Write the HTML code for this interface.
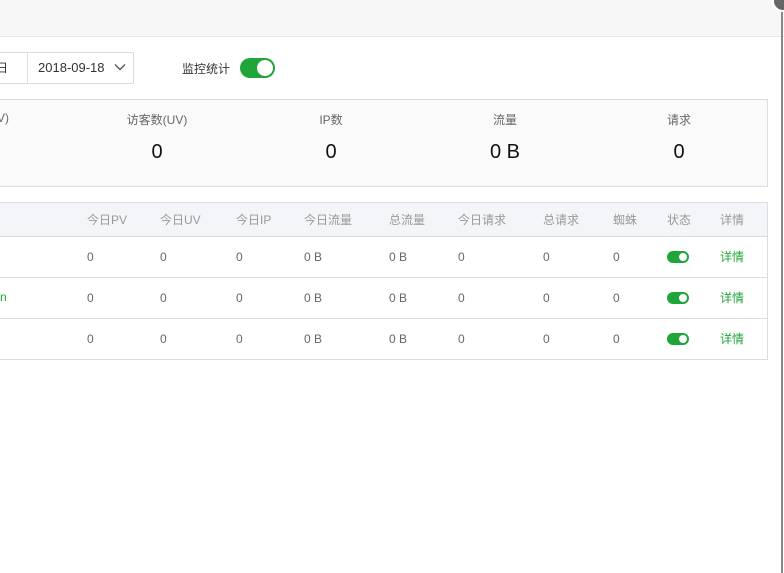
<html><head><style>
body{margin:0;width:784px;height:573px;background:#fff;position:relative;overflow:hidden;font-family:"Liberation Sans","Noto Sans CJK SC",sans-serif;font-size:12px;color:#666}
.a{position:absolute;white-space:nowrap}
.c{transform:translateX(-50%)}
.sw{position:absolute;width:22px;height:12px;border-radius:6px;background:#20a53a}
.sw:after{content:"";position:absolute;right:2px;top:2px;width:8px;height:8px;border-radius:50%;background:#fff}
.h{color:#999;top:211px}
</style></head><body>
<div class="a" style="left:0;top:0;width:784px;height:36px;background:#f7f7f7;border-bottom:1px solid #e5e5e5"></div>
<div class="a" style="left:-10px;top:52px;width:142px;height:30px;border:1px solid #ddd"></div>
<div class="a" style="left:27px;top:52px;width:1px;height:32px;background:#ddd"></div>
<div class="a" style="left:-4px;top:59px;color:#333">日</div>
<div class="a" style="left:38px;top:60px;color:#333;font-size:13px">2018-09-18</div>
<svg class="a" style="left:114px;top:63px" width="12" height="8"><path d="M1 1.5L6 6.5L11 1.5" fill="none" stroke="#555" stroke-width="1.4"/></svg>
<div class="a" style="left:182px;top:60px;color:#333">监控统计</div>
<div class="a" style="left:240px;top:58px;width:35px;height:20px;border-radius:10px;background:#20a53a"><div style="position:absolute;right:2px;top:2px;width:16px;height:16px;border-radius:50%;background:#fff"></div></div>
<div class="a" style="left:-1px;top:99px;width:767px;height:86px;border:1px solid #ddd;background:#fafafa"></div>
<div class="a" style="left:-3px;top:111px;color:#666">V)</div>
<div class="a c" style="left:157px;top:111px">访客数(UV)</div>
<div class="a c" style="left:331px;top:111px">IP数</div>
<div class="a c" style="left:505px;top:111px">流量</div>
<div class="a c" style="left:679px;top:111px">请求</div>
<div class="a c" style="left:157px;top:141px;font-size:20px;color:#111">0</div>
<div class="a c" style="left:331px;top:141px;font-size:20px;color:#111">0</div>
<div class="a c" style="left:505px;top:141px;font-size:20px;color:#111">0 B</div>
<div class="a c" style="left:679px;top:141px;font-size:20px;color:#111">0</div>
<div class="a" style="left:-1px;top:202px;width:767px;height:156px;border:1px solid #ddd"></div>
<div class="a" style="left:0;top:203px;width:767px;height:33px;background:#f4f5f9;border-bottom:1px solid #ddd"></div>
<div class="a" style="left:0;top:277px;width:767px;height:1px;background:#ddd"></div>
<div class="a" style="left:0;top:318px;width:767px;height:1px;background:#ddd"></div>
<div class="a h" style="left:87px">今日PV</div><div class="a h" style="left:160px">今日UV</div><div class="a h" style="left:236px">今日IP</div><div class="a h" style="left:304px">今日流量</div><div class="a h" style="left:389px">总流量</div><div class="a h" style="left:458px">今日请求</div><div class="a h" style="left:543px">总请求</div><div class="a h" style="left:613px">蜘蛛</div><div class="a h" style="left:667px">状态</div><div class="a h" style="left:720px">详情</div>
<div class="a" style="left:0;top:290px;color:#20a53a">n</div>
<div id="rows"></div>
<script>
var t=[250,291,332],h='';
t.forEach(function(y){
[[87,'0'],[160,'0'],[236,'0'],[304,'0 B'],[389,'0 B'],[458,'0'],[543,'0'],[613,'0']].forEach(function(c){h+='<div class="a" style="left:'+c[0]+'px;top:'+y+'px">'+c[1]+'</div>'});
h+='<div class="sw" style="left:667px;top:'+(y+1)+'px"></div><div class="a" style="left:720px;top:'+(y-2)+'px;color:#20a53a">详情</div>';
});
document.getElementById('rows').innerHTML=h;
</script>
<div class="a" style="left:781px;top:10px;width:2px;height:563px;background:#888"></div>
<div class="a" style="left:772px;top:-10px;width:18px;height:18px;border-radius:50%;background:#666;border:2px solid #fff"></div>
</body></html>
